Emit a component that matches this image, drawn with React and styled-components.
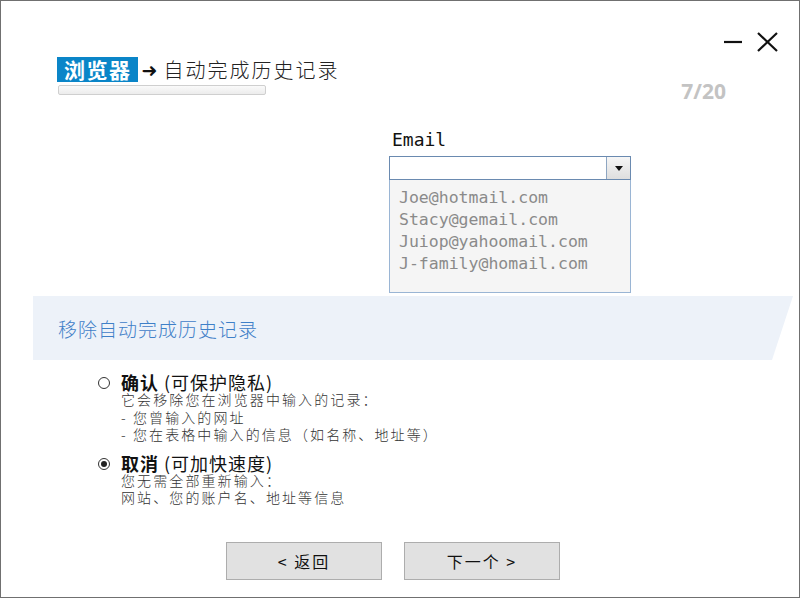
import styled, { createGlobalStyle } from "styled-components";

const GlobalStyle = createGlobalStyle`
  html, body { margin: 0; padding: 0; background: #fff; }
  body { font-family: "Noto Sans CJK SC", "Liberation Sans", sans-serif; }
  * { box-sizing: border-box; }
`

const Window = styled.div`
  width: 800px;
  height: 598px;
  border: 1px solid #707070;
  background: #fff;
  display: flex;
  flex-direction: column;
  overflow: hidden;
`

const Header = styled.div`
  display: flex;
  justify-content: space-between;
  align-items: flex-start;
  padding: 31px 21px 0 56px;
`

const TitleBlock = styled.div`
  margin-top: 25px;
  display: flex;
  flex-direction: column;
  gap: 3px;
`

const TitleRow = styled.div`
  display: flex;
  align-items: center;
  height: 25px;
`

const Tag = styled.span`
  background: #0a85c8;
  color: #fff;
  font-size: 21px;
  font-weight: 700;
  line-height: 25px;
  padding: 0 6px 0 7px;
  letter-spacing: 1.5px;
`

const Arrow = styled.span`
  font-family: "DejaVu Sans", sans-serif;
  font-size: 19px;
  font-weight: 700;
  color: #111;
  margin: 0 6px 0 4px;
`

const Title = styled.span`
  font-size: 20px;
  font-weight: 300;
  color: #222;
  letter-spacing: 2px;
`

const Progress = styled.div`
  width: 208px;
  height: 10px;
  border: 1px solid #cfcfcf;
  border-radius: 2px;
  background: linear-gradient(#fafafa, #ececec);
  margin-left: 1px;
`

const SideBlock = styled.div`
  display: flex;
  flex-direction: column;
  align-items: flex-end;
`

const Controls = styled.div`
  display: flex;
  align-items: center;
  gap: 14px;
  height: 20px;
`

const IconBtn = styled.svg`
  display: block;
  stroke: #111;
  stroke-width: 2.2;
  fill: none;
`

const Counter = styled.div`
  font-family: "Open Sans", "Liberation Sans", sans-serif;
  font-size: 21px;
  font-weight: 700;
  color: #c3c3c3;
  margin: 25px 52px 0 0;
`

const Field = styled.div`
  margin: 24px 0 0 388px;
  width: 242px;
`

const Label = styled.div`
  font-family: "DejaVu Sans Mono", monospace;
  font-size: 18px;
  color: #111;
  padding-left: 3px;
  line-height: 22px;
  margin-bottom: 5px;
`

const Combo = styled.div`
  display: flex;
  height: 24px;
  border: 1px solid #6a8ab0;
  background: #fff;
`

const ComboInput = styled.div`
  flex: 1;
`

const DropBtn = styled.div`
  width: 24px;
  border-left: 1px solid #8ea6c2;
  background: linear-gradient(#f6f6f6, #dedede);
  display: flex;
  align-items: center;
  justify-content: center;
`

const List = styled.div`
  height: 113px;
  border: 1px solid #9ab5d4;
  border-top: none;
  background: #f5f5f5;
  padding: 7px 0 0 9px;
`

const Item = styled.div`
  font-family: "DejaVu Sans Mono", monospace;
  font-size: 16.5px;
  line-height: 22px;
  color: #8a8a8a;
`

const Banner = styled.div`
  margin: 3px 0 0 32px;
  width: 760px;
  height: 64px;
  background: #edf2f9;
  clip-path: polygon(0 0, 100% 0, calc(100% - 21px) 100%, 0 100%);
  display: flex;
  align-items: center;
  padding-left: 25px;
  font-size: 19px;
  font-weight: 300;
  color: #3f80c8;
  letter-spacing: 1px;
`

const Options = styled.div`
  margin: 13px 0 0 97px;
  display: flex;
  flex-direction: column;
  gap: 10px;
`

const Option = styled.div`
  display: flex;
  align-items: flex-start;
  gap: 11px;
`

const Radio = styled.span`
  flex: none;
  width: 12px;
  height: 12px;
  margin-top: 4px;
  border: 1px solid #333;
  border-radius: 50%;
  display: flex;
  align-items: center;
  justify-content: center;
  &::after {
    content: "";
    width: 6px;
    height: 6px;
    border-radius: 50%;
    background: ${p => (p.$checked ? "#222" : "transparent")};
  }
`

const OptionBody = styled.div`
  display: flex;
  flex-direction: column;
`

const OptionTitle = styled.div`
  font-size: 18px;
  line-height: 18px;
  color: #111;
  letter-spacing: 1px;
  b { font-weight: 700; letter-spacing: 1px; }
`

const Desc = styled.div`
  font-size: 14px;
  line-height: 17.5px;
  color: #333;
  letter-spacing: 2.1px;
  font-weight: 300;
`

const ButtonRow = styled.div`
  margin-top: auto;
  margin-bottom: 17px;
  display: flex;
  justify-content: center;
  gap: 22px;
  padding-right: 14px;
`

const Button = styled.button`
  width: 156px;
  height: 38px;
  border: 1px solid #adadad;
  background: #e1e1e1;
  font-family: "Noto Sans CJK SC", sans-serif;
  font-size: 16px;
  color: #111;
  letter-spacing: 2px;
  padding: 0;
`

const emails = [
  "Joe@hotmail.com",
  "Stacy@gemail.com",
  "Juiop@yahoomail.com",
  "J-family@homail.com",
]

function App() {
  return (
    <>
      <GlobalStyle />
      <Window>
        <Header>
          <TitleBlock>
            <TitleRow>
              <Tag>浏览器</Tag>
              <Arrow>➜</Arrow>
              <Title>自动完成历史记录</Title>
            </TitleRow>
            <Progress />
          </TitleBlock>
          <SideBlock>
            <Controls>
              <IconBtn width="20" height="20" viewBox="0 0 20 20">
                <path d="M1 10h18" />
              </IconBtn>
              <IconBtn width="21" height="20" viewBox="0 0 21 20">
                <path d="M1 1l19 18M20 1L1 19" />
              </IconBtn>
            </Controls>
            <Counter>7/20</Counter>
          </SideBlock>
        </Header>

        <Field>
          <Label>Email</Label>
          <Combo>
            <ComboInput />
            <DropBtn>
              <svg width="8" height="5" viewBox="0 0 8 5">
                <path d="M0 0h8L4 5z" fill="#111" />
              </svg>
            </DropBtn>
          </Combo>
          <List>
            {emails.map(e => (
              <Item key={e}>{e}</Item>
            ))}
          </List>
        </Field>

        <Banner>移除自动完成历史记录</Banner>

        <Options>
          <Option>
            <Radio />
            <OptionBody>
              <OptionTitle><b>确认</b> (可保护隐私)</OptionTitle>
              <Desc>它会移除您在浏览器中输入的记录：</Desc>
              <Desc>- 您曾输入的网址</Desc>
              <Desc>- 您在表格中输入的信息（如名称、地址等）</Desc>
            </OptionBody>
          </Option>
          <Option>
            <Radio $checked />
            <OptionBody>
              <OptionTitle><b>取消</b> (可加快速度)</OptionTitle>
              <Desc>您无需全部重新输入：</Desc>
              <Desc>网站、您的账户名、地址等信息</Desc>
            </OptionBody>
          </Option>
        </Options>

        <ButtonRow>
          <Button>&lt; 返回</Button>
          <Button>下一个 &gt;</Button>
        </ButtonRow>
      </Window>
    </>
  )
}

export default App;
